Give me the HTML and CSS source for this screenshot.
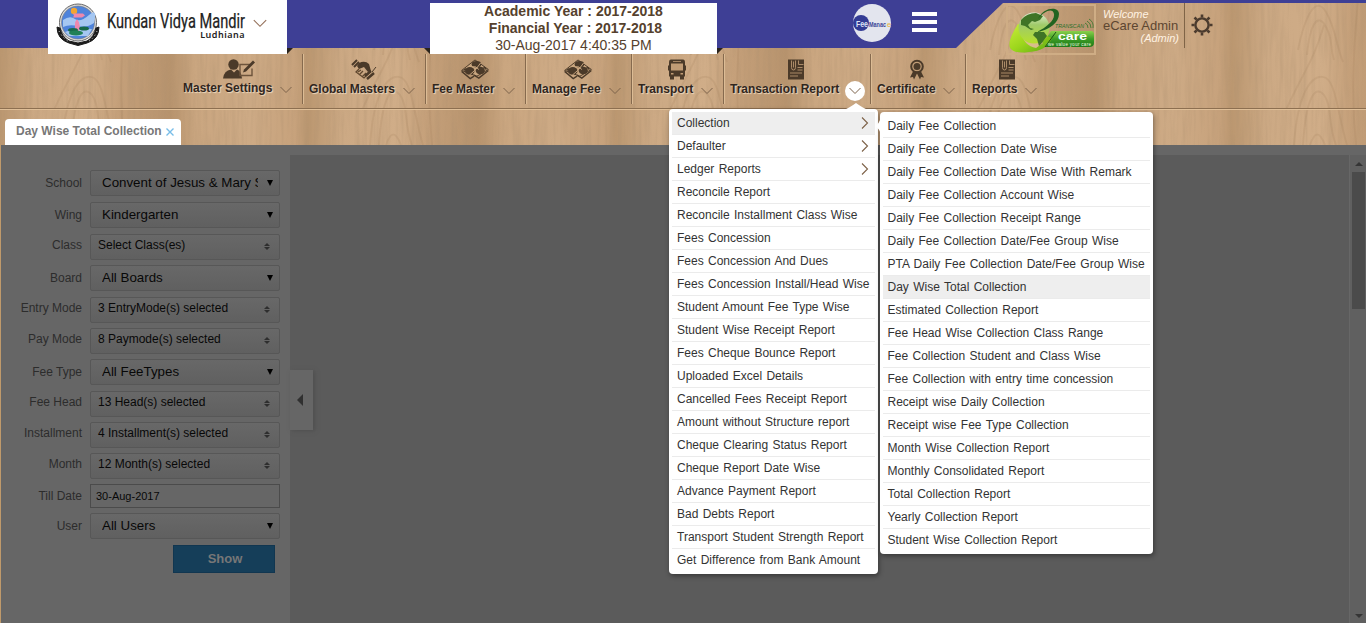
FILE: index.html
```html
<!DOCTYPE html>
<html lang="en">
<head>
<meta charset="utf-8">
<title>Day Wise Total Collection</title>
<link rel="stylesheet" href="styles.css">
</head>
<body>
<svg class="defs" width="0" height="0">
  <defs>
    <symbol id="down" viewBox="0 0 12 8"><path d="M.5 1 6 6.5 11.500 1" fill="none" stroke="currentColor"/></symbol>
    <symbol id="right" viewBox="0 0 8 12"><path d="M1 .5 6.500 6 1 11.500" fill="none" stroke="#7d6248" stroke-width="1.100"/></symbol>
    <symbol id="money" viewBox="0 0 30 22">
      <path d="M1 12 15 1 29 11 17 18Z" fill="#c9a67f" stroke="#4b3a29" stroke-width="1"/>
      <path d="M1 13 10 20.500 14 18M29 12 19 20 14 17" fill="none" stroke="#4b3a29" stroke-width="1.500"/>
      <ellipse cx="16.500" cy="5.500" rx="5" ry="3.400" fill="#4b3a29"/>
      <ellipse cx="9.500" cy="12.500" rx="5" ry="4" fill="#4b3a29"/>
      <ellipse cx="20.500" cy="12" rx="4.800" ry="4" fill="#4b3a29"/>
      <path d="M9 17Q16 12 21 4M12 8q4-1 7 3" fill="none" stroke="#c9a67f" stroke-width="1"/>
      <path d="M3 12 6 10M24 8 27 11" stroke="#4b3a29" stroke-width="1.500"/>
    </symbol>
    <symbol id="report" viewBox="0 0 16 20">
      <path d="M0 0H16V20H0Z" fill="#4b3a29"/>
      <path d="M3.500 1V8q0 2.500 2 2.500t2-2.500V1M5.500 2v6M10.500 1v4h5M9.500 8h5M9.500 10.500h5M2 13.500h12M2 16.500h8" fill="none" stroke="#b5936e" stroke-width=".9"/>
    </symbol>
  </defs>
</svg>

<header class="header">
  <svg class="wood" width="1366" height="145">
    <defs>
      <filter id="grain" x="0" y="0" width="100%" height="100%">
        <feTurbulence type="fractalNoise" baseFrequency="0.25 0.018" numOctaves="3" seed="8"/>
        <feColorMatrix values="0 0 0 0 .42  0 0 0 0 .28  0 0 0 0 .16  1.6 0 0 0 -.62"/>
      </filter>
      <pattern id="knots" width="308" height="145" patternUnits="userSpaceOnUse" x="24">
        <g fill="none" stroke="#997550" stroke-width="2" opacity=".17">
          <path d="M38 145C42 85 60 72 70 78S82 115 91 145M47 145C50 95 60 85 68 95S72 125 80 145M30 110C48 70 56 65 68 25M42 50C49 15 60-5 70 12S80 45 87 62M51 55C54 23 62 12 70 27S73 45 78 60M100 145C96 105 96 65 102 0M54 145q7-21 15 0"/>
        </g>
      </pattern>
    </defs>
    <rect width="1366" height="145" filter="url(#grain)" opacity=".42"/>
    <rect width="1366" height="145" fill="url(#knots)"/>
  </svg>
  <svg class="ribbon" width="1366" height="55">
    <path d="M0 0H1366V3H1003L956 48H0Z" fill="#3e3f95"/>
    <path d="M287 48h6l-6 6zM424 48h6v6zM717 48h6l-6 6z" fill="#2b241d"/>
  </svg>

  <div class="topbar">
    <div class="school">
      <svg width="44" height="44" viewBox="0 0 44 44">
        <circle cx="22" cy="19.500" r="18.500" fill="#ddd" stroke="#666"/>
        <circle cx="22" cy="19.500" r="16.500" fill="#4e83db" stroke="#777" stroke-width=".6"/>
        <path d="M7 17q7-5 12-1t14-4 5 8q-7 5-16 3T7 24ZM9 29q10-4 27-3l-4 7H13Z" fill="#a5c7f2"/>
        <circle cx="18" cy="8" r="3.200" fill="#f2a632"/>
        <path d="M17 10.500h10l2 2-3 2h-9l1-2ZM21 16q5 6 1 14-4-4-3-8 0-4 2-6Z" fill="#ee88ad"/>
        <ellipse cx="17" cy="27" rx="5" ry="2" fill="#17694a"/><ellipse cx="28" cy="25.500" rx="5" ry="2" fill="#17694a"/><ellipse cx="20" cy="30" rx="7" ry="2.500" fill="#208057"/>
        <path d="M1 24 4 25Q6 34 13 38L22 40 31 38Q38 34 40 25L43 24Q43 36 31 40L22 42.500 13 40Q1 36 1 24Z" fill="#1b1b1b" stroke="#1b1b1b"/>
        <path d="M3 28q5 9 11 11M41 28q-3 8-10 11" stroke="#ddd" fill="none" stroke-dasharray="1 3"/>
      </svg>
      <div class="school-name">
        <svg width="140" height="22"><text x="0" y="19" font-size="20" textLength="138" lengthAdjust="spacingAndGlyphs">Kundan Vidya Mandir</text></svg>
        <span class="city">Ludhiana</span>
      </div>
      <svg class="school-arrow" width="14" height="9"><use href="#down"/></svg>
    </div>
    <div class="years">
      <b>Academic Year : 2017-2018</b>
      <b class="fin">Financial Year : 2017-2018</b>
      <span>30-Aug-2017 4:40:35 PM</span>
    </div>
    <svg class="round" width="40" height="40" viewBox="0 0 40 40">
      <circle cx="20" cy="20" r="19" fill="#e3e5ee"/>
      <circle cx="9" cy="20" r="8" fill="#333b94"/>
      <text x="4" y="24" font-size="9" font-weight="bold" fill="#dfe2f5" textLength="12" lengthAdjust="spacingAndGlyphs">Fee</text>
      <text x="17" y="24" font-size="7.500" font-weight="bold" fill="#3e4798" textLength="17" lengthAdjust="spacingAndGlyphs">Manac</text><text x="35" y="24" font-size="7.500" fill="#e8b340">e</text>
    </svg>
    <div class="burger"><i></i><i></i><i></i></div>
    <div class="brand">
      <svg width="86" height="45" viewBox="0 0 86 45">
        <defs>
          <linearGradient id="leaf" x2="1" y2="1"><stop stop-color="#c9ec3a"/><stop offset=".5" stop-color="#9cd61c"/><stop offset="1" stop-color="#5aa512"/></linearGradient>
          <linearGradient id="globe" x2="0" y2="1"><stop stop-color="#e4efdc"/><stop offset=".4" stop-color="#9fca6a"/><stop offset="1" stop-color="#b6e02c"/></linearGradient>
          <linearGradient id="tag" x2="0" y2="1"><stop stop-color="#8bd04c"/><stop offset=".5" stop-color="#3c9c25"/><stop offset="1" stop-color="#1e7a18"/></linearGradient>
        </defs>
        <path d="M42 23H82q3 0 3 3V35q0 4-5 4H32Z" fill="url(#tag)"/>
        <path d="M9 16Q-2 33 1 40 5 46 20 44 38 43 43 30Z" fill="url(#leaf)"/>
        <path d="M12 24Q15 38 27 40L34 35 22 27Z" fill="#d9bd8c"/>
        <circle cx="25" cy="20" r="15.500" fill="url(#globe)"/>
        <path d="M12 12Q18 5 27 5L34 8 31 12 26 14 23 13 19 17 21 20 25 21 22 22 16 18 12 17ZM26 24l9 0 3 4-6 8-2 2-2-7-4-4Z" fill="#3f7426"/>
        <path d="M29 11C34-1 50-2 50 6S41 22 28 24C38 19 46 12 45 6S36 2 29 11Z" fill="#236421"/>
        <path d="M47 24 36 39" stroke="#175016"/>
        <text x="46" y="20" font-size="6" fill="#28702a" font-style="italic" textLength="29" lengthAdjust="spacingAndGlyphs">TRANSCAN</text>
        <path d="M76 15q3 1 3 5M78 13q4 2 4 7M80 11q5 3 4 9" fill="none" stroke="#32752a" stroke-width=".8"/>
        <text x="49" y="32" font-size="11" font-weight="bold" fill="#fff" textLength="29" lengthAdjust="spacingAndGlyphs">care</text>
        <text x="39" y="38" font-size="4.500" fill="#e9ffe0" textLength="43">we value your care</text>
      </svg>
    </div>
    <div class="user"><i>Welcome</i><span>eCare Admin</span><i class="role">(Admin)</i></div>
    <div class="gear">
      <svg width="22" height="22" viewBox="-11 -11 22 22">
        <g stroke="#4b3b2e" fill="none"><circle r="6.600" stroke-width="2.400"/><path stroke-width="2.600" d="M0-7.500V-10.500M0 7.500V10.500M-7.500 0H-10.500M7.500 0H10.500M5.300-5.300 7.500-7.500M5.300 5.300 7.500 7.500M-5.300 5.300-7.500 7.500M-5.300-5.300-7.500-7.500"/></g>
      </svg>
    </div>
  </div>

  <nav class="nav">
    <a class="n1"><svg width="33" height="20" viewBox="0 0 33 20"><circle cx="10.500" cy="5" r="5.200" fill="#4b3a29"/><path d="M0 19Q1 11 8 10L11 13 14 10Q18 11 19 19Z" fill="#4b3a29"/><path d="M27 5H17V16H29V9" fill="none" stroke="#6d543c" stroke-width="1.400"/><path d="M30 1 21 10 20 13 23 12 32 3Z" fill="#4b3a29"/></svg><span>Master Settings<svg class="ar"><use href="#down"/></svg></span></a>
    <a class="n2"><svg width="26" height="21" viewBox="0 0 26 21"><path d="M1 6 6 1M3 8 8 3" stroke="#4b3a29" stroke-width="2"/><path d="M8 4Q14 1 18 5L20 12 17 13 13 8 8 10 6 7Z" fill="#4b3a29"/><path d="M8 10 5 13 13 19 18 14M8 16 12 12M11 18 15 14M7 13 10 11" fill="none" stroke="#60482f" stroke-width="1.300"/><path d="M14 17 20 12M16 20 23 14" stroke="#4b3a29" stroke-width="2.500"/><path d="M21 13 25 8" stroke="#4b3a29"/></svg><span>Global Masters<svg class="ar"><use href="#down"/></svg></span></a>
    <a class="n3"><svg width="30" height="21"><use href="#money"/></svg><span>Fee Master<svg class="ar"><use href="#down"/></svg></span></a>
    <a class="n4"><svg width="30" height="21"><use href="#money"/></svg><span>Manage Fee<svg class="ar"><use href="#down"/></svg></span></a>
    <a class="n5"><svg width="18" height="20" viewBox="0 0 18 20"><path d="M3 0H15Q17 0 17 3V17H16V20H12V17H6V20H2V17H1V3Q1 0 3 0Z" fill="#4b3a29"/><path d="M3 4H15V11H3ZM3 13.500h2.500v1.500H3ZM12.500 13.500H15v1.500h-2.500ZM5 1.500h8v.8H5Z" fill="#c19c75"/><path d="M.5 6v5M17.500 6v5" stroke="#4b3a29"/></svg><span>Transport<svg class="ar"><use href="#down"/></svg></span></a>
    <a class="n6"><svg width="16" height="20"><use href="#report"/></svg><span>Transaction Report<svg class="ar on" viewBox="-4 -6 20 20"><circle cx="6" cy="4" r="10" fill="#fff"/><use href="#down" width="12" height="8"/></svg></span></a>
    <a class="n7"><svg width="16" height="20" viewBox="0 0 16 20"><circle cx="8" cy="7" r="5.800" fill="none" stroke="#4b3a29" stroke-width="2"/><circle cx="8" cy="7" r="3.500" fill="#4b3a29"/><path d="M4 12 1 18 4 17.500 5 20 8 14 11 20 12 17.500 15 18 12 12Z" fill="#4b3a29"/></svg><span>Certificate<svg class="ar"><use href="#down"/></svg></span></a>
    <a class="n8"><svg width="16" height="20"><use href="#report"/></svg><span>Reports<svg class="ar"><use href="#down"/></svg></span></a>
  </nav>
  <div class="tabs"><div class="tab">Day Wise Total Collection<svg width="8" height="8"><path d="M.5.5 7.500 7.500M7.500.5.5 7.500" stroke="#78bde8" stroke-width="1.400"/></svg></div></div>
</header>

<main class="main">
  <form class="filters">
    <div class="row sel"><label>School</label><div class="box"><span>Convent of Jesus &amp; Mary School</span></div></div>
    <div class="row sel"><label>Wing</label><div class="box"><span>Kindergarten</span></div></div>
    <div class="row multi"><label>Class</label><div class="box">Select Class(es)</div></div>
    <div class="row sel"><label>Board</label><div class="box"><span>All Boards</span></div></div>
    <div class="row multi"><label>Entry Mode</label><div class="box">3 EntryMode(s) selected</div></div>
    <div class="row multi"><label>Pay Mode</label><div class="box">8 Paymode(s) selected</div></div>
    <div class="row sel"><label>Fee Type</label><div class="box"><span>All FeeTypes</span></div></div>
    <div class="row multi"><label>Fee Head</label><div class="box">13 Head(s) selected</div></div>
    <div class="row multi"><label>Installment</label><div class="box">4 Installment(s) selected</div></div>
    <div class="row multi"><label>Month</label><div class="box">12 Month(s) selected</div></div>
    <div class="row date"><label>Till Date</label><div class="box">30-Aug-2017</div></div>
    <div class="row sel"><label>User</label><div class="box"><span>All Users</span></div></div>
    <div class="show">Show</div>
  </form>
  <section class="report"><div class="handle"></div></section>
  <div class="scroll"><i class="up"></i><i class="thumb"></i><i class="dn"></i></div>
</main>

<div class="menu first">
  <svg class="tip" width="24" height="7"><path d="M0 7Q5 5 12 0 19 5 24 7Z" fill="#fff"/></svg>
  <a class="hot">Collection<svg><use href="#right"/></svg></a>
  <a>Defaulter<svg><use href="#right"/></svg></a>
  <a>Ledger Reports<svg><use href="#right"/></svg></a>
  <a>Reconcile Report</a>
  <a>Reconcile Installment Class Wise</a>
  <a>Fees Concession</a>
  <a>Fees Concession And Dues</a>
  <a>Fees Concession Install/Head Wise</a>
  <a>Student Amount Fee Type Wise</a>
  <a>Student Wise Receipt Report</a>
  <a>Fees Cheque Bounce Report</a>
  <a>Uploaded Excel Details</a>
  <a>Cancelled Fees Receipt Report</a>
  <a>Amount without Structure report</a>
  <a>Cheque Clearing Status Report</a>
  <a>Cheque Report Date Wise</a>
  <a>Advance Payment Report</a>
  <a>Bad Debts Report</a>
  <a>Transport Student Strength Report</a>
  <a>Get Difference from Bank Amount</a>
</div>
<div class="menu second">
  <svg class="side" width="5" height="16"><path d="M5 0Q3 5 0 8 3 11 5 16Z" fill="#fff"/></svg>
  <a>Daily Fee Collection</a>
  <a>Daily Fee Collection Date Wise</a>
  <a>Daily Fee Collection Date Wise With Remark</a>
  <a>Daily Fee Collection Account Wise</a>
  <a>Daily Fee Collection Receipt Range</a>
  <a>Daily Fee Collection Date/Fee Group Wise</a>
  <a>PTA Daily Fee Collection Date/Fee Group Wise</a>
  <a class="hot">Day Wise Total Collection</a>
  <a>Estimated Collection Report</a>
  <a>Fee Head Wise Collection Class Range</a>
  <a>Fee Collection Student and Class Wise</a>
  <a>Fee Collection with entry time concession</a>
  <a>Receipt wise Daily Collection</a>
  <a>Receipt wise Fee Type Collection</a>
  <a>Month Wise Collection Report</a>
  <a>Monthly Consolidated Report</a>
  <a>Total Collection Report</a>
  <a>Yearly Collection Report</a>
  <a>Student Wise Collection Report</a>
</div>
</body>
</html>
```
FILE: styles.css
```css
* { box-sizing: border-box; }
body { margin: 0; height: 623px; overflow: hidden; position: relative; display: flex; flex-direction: column; font: 12px "Liberation Sans", Arial, sans-serif; background: #c09a6b; }
.defs { position: absolute; }
svg { flex: none; display: block; }

/* header */
.header { position: relative; flex: none; height: 145px; background: repeating-linear-gradient(90deg, #bb9770 0, #cca984 35px, #d0ad88 90px, #c5a07a 118px, #b7936d 170px, #caa680 196px, #cdaa85 250px, #c7a27c 295px, #bb9770 308px); }
.wood, .ribbon { position: absolute; left: 0; top: 0; }
.topbar { position: relative; height: 54px; display: flex; align-items: flex-start; }
.school { margin-left: 48px; width: 239px; height: 54px; padding-left: 8px; background: #fff; display: flex; align-items: flex-start; }
.school > svg:first-child { margin-top: 3px; }
.school-name { width: 140px; margin: 9px 0 0 7px; font-family: Roboto, sans-serif; color: #222; }
.school-name svg { fill: #222; stroke: #222; stroke-width: .25px; overflow: visible; }
.city { display: block; margin: -2px 2px 0 0; text-align: right; font: 600 9px/12px "Noto Sans", sans-serif; letter-spacing: .5px; }
.school-arrow { margin: 19px 0 0 6px; color: #94705a; }
.years { margin: 3px 0 0 143px; width: 287px; height: 51px; background: #fff; color: #55412d; text-align: center; font-size: 14px; line-height: 17px; display: flex; flex-direction: column; align-items: center; }
.years .fin { padding-left: 4px; }
.round { margin: 3px 0 0 135px; }
.burger { width: 25px; margin: 12px 0 0 20px; display: grid; gap: 4px; }
.burger i { height: 4px; background: #fff; }
.brand { margin: 4px 0 0 69px; width: 90px; height: 51px; border: 2px solid #cfad85; padding: 2px 0 0 1px; }
.user { width: 81px; margin: 8px 0 0 7px; font-size: 11px; line-height: 12px; color: #5d4631; display: flex; flex-direction: column; }
.user i { color: #fff2e2; }
.user span { font-size: 13px; line-height: 12px; white-space: nowrap; }
.user .role { align-self: flex-end; margin-right: 5px; }
.gear { margin-top: 3px; height: 45px; border-left: 1px solid #7f6447; padding: 11px 0 0 6px; }

.nav { position: relative; height: 55px; padding-left: 177px; display: flex; border-bottom: 1px solid #8d6f50; box-shadow: 0 1px #dfbf98; }
.nav a { height: 50px; padding: 5px 0 0 6px; border-right: 1px solid #866a4e; box-shadow: 1px 0 #dcbc95; color: #30261e; font-weight: bold; text-shadow: 1px 1px 1px #eed9bd; }
.nav a > svg { height: 21px; margin: 0 auto; position: relative; left: -4px; }
.nav .n1 > svg, .nav .n2 > svg { left: -3px; }
.nav a > svg + span { display: flex; align-items: center; height: 18px; white-space: nowrap; justify-content: space-between; padding-right: 10px; }
.nav .ar { width: 12px; height: 8px; margin-top: 4px; color: #7d634b; }
.nav .ar.on { width: 20px; height: 20px; margin: 4px -5px 0 0; }
.nav .n1 { width: 126px; } .nav .n1 > span { margin-top: -1px; }
.nav .n2 { width: 123px; } .nav .n3 { width: 100px; } .nav .n4 { width: 106px; }
.nav .n5 { width: 92px; } .nav .n6 { width: 147px; } .nav .n7 { width: 95px; }
.nav .n8 { width: 81px; border: 0; box-shadow: none; }
.nav .n8 > svg { left: -3px; }
.tabs { position: relative; height: 36px; padding: 10px 0 0 5px; }
.tab { width: 176px; height: 26px; padding: 0 7px 0 11px; background: #fff; border-radius: 4px 4px 0 0; color: #777; font-weight: bold; line-height: 24px; white-space: nowrap; display: flex; justify-content: space-between; }
.tab svg { margin-top: 9px; }

/* filter form and report area */
.main { flex: 1; margin-left: 1px; padding-top: 10px; background: #666; display: flex; }
.filters { width: 289px; padding: 15px 10px 0 0; color: #2c2c2c; }
.row { display: grid; grid-template-columns: 81px 190px; column-gap: 8px; }
.row label { text-align: right; line-height: 26px; }
.row .box { height: 26px; border: 1px solid #575757; border-radius: 2px; color: #080808; position: relative; white-space: nowrap; background: linear-gradient(#686868, #606060); }
.sel { height: 32px; }
.sel .box { padding: 0 21px 0 11px; font-size: 13.333px; line-height: 23px; }
.sel .box span { display: block; overflow: hidden; }
.sel .box::after { content: ""; position: absolute; right: 6px; top: 9px; border: 3px solid transparent; border-top: 6px solid #000; border-bottom: 0; }
.multi { height: 31px; }
.multi label { line-height: 22px; }
.multi .box { padding-left: 7px; line-height: 21px; }
.multi .box::before, .multi .box::after { content: ""; position: absolute; right: 9px; border: 3px solid transparent; }
.multi .box::before { top: 8px; border-top: 0; border-bottom: 3px solid #2e2e2e; }
.multi .box::after { top: 12px; border-bottom: 0; border-top: 3px solid #2e2e2e; }
.date { height: 29px; }
.date label { line-height: 24px; }
.date .box { height: 24px; padding-left: 5px; font-size: 11px; line-height: 23px; border-color: #4b4b4b; border-radius: 0; background: #666; }
.show { width: 102px; height: 28px; margin: 0 0 0 172px; background: #153e59; border: 1px solid #113650; color: #777; font-weight: bold; font-size: 13px; line-height: 26px; text-align: center; padding-left: 2px; }
.report { flex: 1; background: #5b5b5b; padding-top: 215px; }
.handle { width: 23px; height: 60px; background: #666; box-shadow: 2px 1px 4px #505050; padding: 24px 0 0 7px; }
.handle::before { content: ""; display: block; width: 0; border: 6px solid transparent; border-right-color: #303030; border-left: 0; }
.scroll { width: 17px; border-left: 1px solid #676767; background: #606060; display: flex; flex-direction: column; align-items: center; padding-top: 7px; }
.scroll .up { border: 4px solid transparent; border-top: 0; border-bottom-color: #353535; margin-left: 2px; }
.scroll .thumb { width: 13px; height: 137px; margin: 6px 0 0 1px; background: #4b4b4b; }
.scroll .dn { margin: auto 0 5px 2px; border: 4px solid transparent; border-bottom: 0; border-top-color: #353535; }

/* dropdown menus */
.menu { position: absolute; background: #fff; border-radius: 4px; padding: 3px; box-shadow: 1px 2px 5px rgba(0,0,0,.4); color: #333; word-spacing: 1px; }
.menu a { display: flex; justify-content: space-between; height: 23px; padding: 0 6px 0 5px; line-height: 23px; border-bottom: 1px solid #ebebeb; white-space: nowrap; }
.menu a:last-child { border: 0; }
.menu .hot { background: #eee; }
.menu a svg { width: 8px; height: 12px; margin-top: 5px; }
.first { left: 669px; top: 109px; width: 209px; height: 465px; }
.second { left: 880px; top: 112px; width: 273px; height: 442px; }
.second a { padding-left: 4.500px; }
.menu .tip { position: absolute; left: 175px; top: -6px; }
.menu .side { position: absolute; left: -4px; top: 6px; }
```
